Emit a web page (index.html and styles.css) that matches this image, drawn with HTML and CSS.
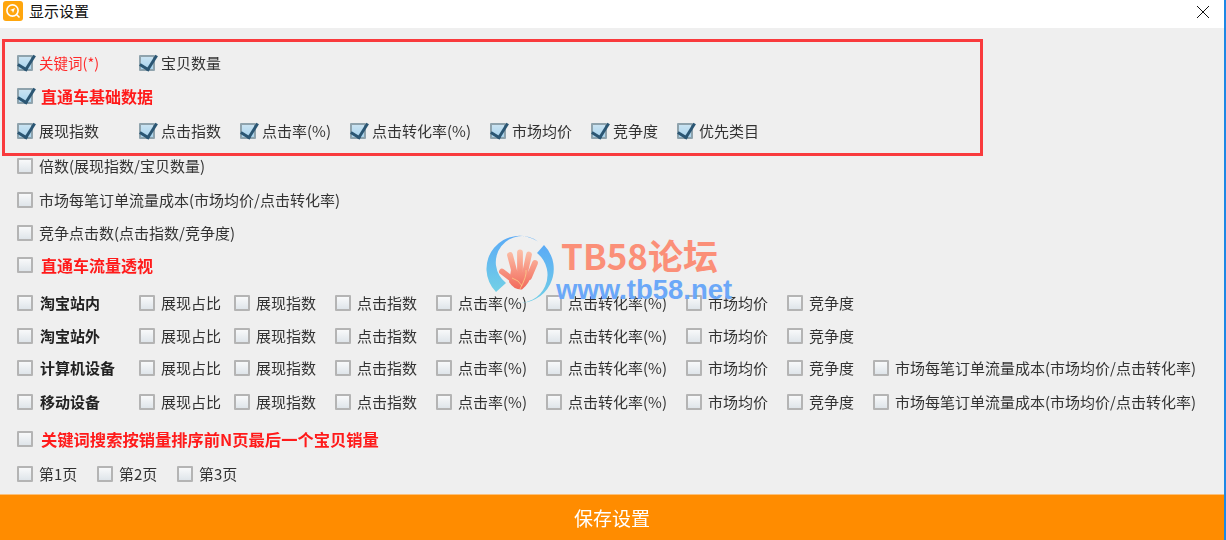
FILE: index.html
```html
<!DOCTYPE html>
<html lang="zh-CN">
<head>
  <meta charset="UTF-8">
  <title>显示设置</title>
  <link rel="stylesheet" href="styles.css">
</head>
<body>

  <div class="titlebar">
    <svg class="app-icon" viewBox="0 0 20 20" width="20" height="20">
      <rect width="20" height="20" rx="3" fill="#ffa60d"/>
      <circle cx="9.5" cy="9.5" r="5.6" fill="none" stroke="#fff" stroke-width="1.6"/>
      <path d="M13.5 13.5l3 3" stroke="#fff" stroke-width="1.6"/>
      <path d="M12 7l-5 2 2.2.8.8 2.2z" fill="#fff"/>
    </svg>
    <span class="title">显示设置</span>
    <svg class="close" viewBox="0 0 12 12" width="12" height="12">
      <path d="M0 0l12 12M12 0L0 12" stroke="#111" stroke-width="1" fill="none"/>
    </svg>
  </div>

  <div class="main">
    <div class="redbox">
      <div class="row cols-top">
        <label class="opt red"><input type="checkbox" checked>关键词(*)</label>
        <label class="opt"><input type="checkbox" checked>宝贝数量</label>
      </div>
      <div class="row">
        <label class="opt head"><input type="checkbox" checked>直通车基础数据</label>
      </div>
      <div class="row cols-base">
        <label class="opt"><input type="checkbox" checked>展现指数</label>
        <label class="opt"><input type="checkbox" checked>点击指数</label>
        <label class="opt"><input type="checkbox" checked>点击率(%)</label>
        <label class="opt"><input type="checkbox" checked>点击转化率(%)</label>
        <label class="opt"><input type="checkbox" checked>市场均价</label>
        <label class="opt"><input type="checkbox" checked>竞争度</label>
        <label class="opt"><input type="checkbox" checked>优先类目</label>
      </div>
    </div>

    <div class="rest">
      <div class="row first">
        <label class="opt"><input type="checkbox">倍数(展现指数/宝贝数量)</label>
      </div>
      <div class="row gap-14">
        <label class="opt"><input type="checkbox">市场每笔订单流量成本(市场均价/点击转化率)</label>
      </div>
      <div class="row">
        <label class="opt"><input type="checkbox">竞争点击数(点击指数/竞争度)</label>
      </div>
      <div class="row">
        <label class="opt head"><input type="checkbox">直通车流量透视</label>
      </div>

      <div class="row cols-flow gap-17">
        <label class="opt strong"><input type="checkbox">淘宝站内</label>
        <label class="opt"><input type="checkbox">展现占比</label>
        <label class="opt"><input type="checkbox">展现指数</label>
        <label class="opt"><input type="checkbox">点击指数</label>
        <label class="opt"><input type="checkbox">点击率(%)</label>
        <label class="opt"><input type="checkbox">点击转化率(%)</label>
        <label class="opt"><input type="checkbox">市场均价</label>
        <label class="opt"><input type="checkbox">竞争度</label>
      </div>
      <div class="row cols-flow">
        <label class="opt strong"><input type="checkbox">淘宝站外</label>
        <label class="opt"><input type="checkbox">展现占比</label>
        <label class="opt"><input type="checkbox">展现指数</label>
        <label class="opt"><input type="checkbox">点击指数</label>
        <label class="opt"><input type="checkbox">点击率(%)</label>
        <label class="opt"><input type="checkbox">点击转化率(%)</label>
        <label class="opt"><input type="checkbox">市场均价</label>
        <label class="opt"><input type="checkbox">竞争度</label>
      </div>
      <div class="row cols-flow gap-12">
        <label class="opt strong"><input type="checkbox">计算机设备</label>
        <label class="opt"><input type="checkbox">展现占比</label>
        <label class="opt"><input type="checkbox">展现指数</label>
        <label class="opt"><input type="checkbox">点击指数</label>
        <label class="opt"><input type="checkbox">点击率(%)</label>
        <label class="opt"><input type="checkbox">点击转化率(%)</label>
        <label class="opt"><input type="checkbox">市场均价</label>
        <label class="opt"><input type="checkbox">竞争度</label>
        <label class="opt"><input type="checkbox">市场每笔订单流量成本(市场均价/点击转化率)</label>
      </div>
      <div class="row cols-flow gap-14">
        <label class="opt strong"><input type="checkbox">移动设备</label>
        <label class="opt"><input type="checkbox">展现占比</label>
        <label class="opt"><input type="checkbox">展现指数</label>
        <label class="opt"><input type="checkbox">点击指数</label>
        <label class="opt"><input type="checkbox">点击率(%)</label>
        <label class="opt"><input type="checkbox">点击转化率(%)</label>
        <label class="opt"><input type="checkbox">市场均价</label>
        <label class="opt"><input type="checkbox">竞争度</label>
        <label class="opt"><input type="checkbox">市场每笔订单流量成本(市场均价/点击转化率)</label>
      </div>

      <div class="row gap-18">
        <label class="opt head long"><input type="checkbox">关键词搜索按销量排序前N页最后一个宝贝销量</label>
      </div>
      <div class="row cols-pages gap-14">
        <label class="opt"><input type="checkbox">第1页</label>
        <label class="opt"><input type="checkbox">第2页</label>
        <label class="opt"><input type="checkbox">第3页</label>
      </div>
    </div>
  </div>

  <button class="save">保存设置</button>

  <!-- 水印 -->
  <div class="watermark">
    <svg class="wm-logo" viewBox="0 0 80 75" width="80" height="75">
      <defs>
        <linearGradient id="ring" x1="0" y1="0" x2="0" y2="1">
          <stop offset="0" stop-color="#5aaaf6"/>
          <stop offset="1" stop-color="#72d0e6"/>
        </linearGradient>
        <linearGradient id="hand" gradientUnits="userSpaceOnUse" x1="0" y1="18" x2="0" y2="58">
          <stop offset="0" stop-color="#fcc0a8"/>
          <stop offset="1" stop-color="#f2685a"/>
        </linearGradient>
      </defs>
      <path d="M56 9.500A33 33 0 0 0 14 60L24 51A26 26 0 0 1 56 9.500Z" fill="url(#ring)"/>
      <path d="M62 13A34 34 0 0 1 33 70.500A28 28 0 0 0 55 21Z" fill="url(#ring)"/>
      <g fill="none" stroke="url(#hand)" stroke-width="5.8" stroke-linecap="round">
        <path d="M28 23L33 42"/>
        <path d="M38 20.500V41"/>
        <path d="M47 22.500L43 41"/>
        <path d="M53 31L47 45"/>
        <path d="M20 39.500L31 48"/>
      </g>
      <path d="M29 38L50 42Q47 52 40 57.500Q32 58 27 50Z" fill="url(#hand)"/>
      <path d="M30 46Q37 48 40 54M44 38Q45 44 38 57" fill="none" stroke="#fbd98a" stroke-width=".7"/>
    </svg>
    <div class="wm-cn">TB58论坛</div>
    <div class="wm-url">www.tb58.net</div>
  </div>

</body>
</html>
```

FILE: styles.css
```css
* {
  box-sizing: border-box;
}

body {
  margin: 0;
  height: 100vh;
  display: flex;
  flex-direction: column;
  overflow: hidden;
  background: #efefef;
  border-right: 2px solid #1e88e5;
  font-family: "Noto Sans CJK SC", "Liberation Sans", sans-serif;
  color: #333;
}

.titlebar {
  height: 28px;
  flex: none;
  background: #fff;
  display: flex;
  align-items: flex-start;
  padding: 1px 15px 0 3px;
}

.app-icon {
  flex: none;
}

.title {
  margin-left: 6px;
  font-size: 15px;
  line-height: 20px;
  color: #111;
}

.close {
  margin-left: auto;
  margin-top: 5px;
}

.main {
  flex: 1;
  filter: blur(0.4px);
}

.redbox {
  width: 981px;
  height: 117px;
  margin: 11px 0 0 2px;
  padding: 11px 0 0 12px;
  border: 3px solid #f93a3d;
  display: flex;
  flex-direction: column;
  gap: 14px;
}

.rest {
  padding-left: 17px;
}

.row {
  height: 20px;
  display: flex;
  align-items: center;
}

.rest .row {
  margin-top: 13px;
}

.rest .row.first {
  margin-top: 0;
}

.rest .row.gap-12 {
  margin-top: 12px;
}

.rest .row.gap-14 {
  margin-top: 14px;
}

.rest .row.gap-17 {
  margin-top: 17px;
}

.rest .row.gap-18 {
  margin-top: 18px;
}

.cols-top,
.cols-base,
.cols-flow,
.cols-pages {
  display: grid;
}

.cols-top {
  grid-template-columns: 122px auto;
}

.cols-base {
  grid-template-columns: 122px 101px 110px 140px 101px 86px auto;
}

.cols-flow {
  grid-template-columns: 122px 95px 101px 101px 110px 140px 101px 86px auto;
}

.cols-pages {
  grid-template-columns: 80px 80px auto;
}

.opt {
  display: flex;
  align-items: center;
  gap: 6px;
  font-size: 15px;
  line-height: 20px;
  white-space: nowrap;
}

.opt input {
  appearance: none;
  position: relative;
  flex: none;
  width: 16px;
  height: 16px;
  margin: 0;
  border: 2px solid #b4b4b4;
  border-radius: 1px;
  background: linear-gradient(#f8f9fa, #dfe5ea);
}

.opt input:checked {
  border-color: #8fa3ad;
  background: linear-gradient(#c9e3f2, #a9d4ee);
}

.opt input:checked::after {
  content: "";
  position: absolute;
  left: 2px;
  top: -5px;
  width: 8px;
  height: 15px;
  border-right: 3px solid #2b5673;
  border-bottom: 3px solid #2b5673;
  transform: rotate(32deg);
}

.red {
  color: #ff2a2a;
  font-size: 14.5px;
}

.head {
  gap: 8px;
  margin-top: -2px;
  color: #ff1a1a;
  font-size: 16px;
  font-weight: 700;
}

.head.long {
  font-size: 16.3px;
}

.strong {
  gap: 7px;
  color: #222;
  font-weight: 700;
}

.save {
  flex: none;
  height: 46px;
  border: 0;
  border-top: 1px solid #fbc07a;
  background: #ff8c00;
  color: #fff;
  font-family: inherit;
  font-size: 19px;
  filter: blur(0.3px);
}

.watermark {
  position: absolute;
  left: 482px;
  top: 232px;
  width: 260px;
  height: 75px;
}

.wm-logo {
  position: absolute;
  left: 0;
  top: 0;
}

.wm-cn {
  position: absolute;
  left: 79px;
  top: 0;
  font-size: 35px;
  line-height: 46px;
  font-weight: 700;
  color: #fb8f78;
  white-space: nowrap;
}

.wm-url {
  position: absolute;
  left: 74px;
  top: 42px;
  font-family: "Liberation Sans", sans-serif;
  font-size: 27.5px;
  line-height: 32px;
  font-weight: 700;
  color: #6ba8f8;
  white-space: nowrap;
}
```
